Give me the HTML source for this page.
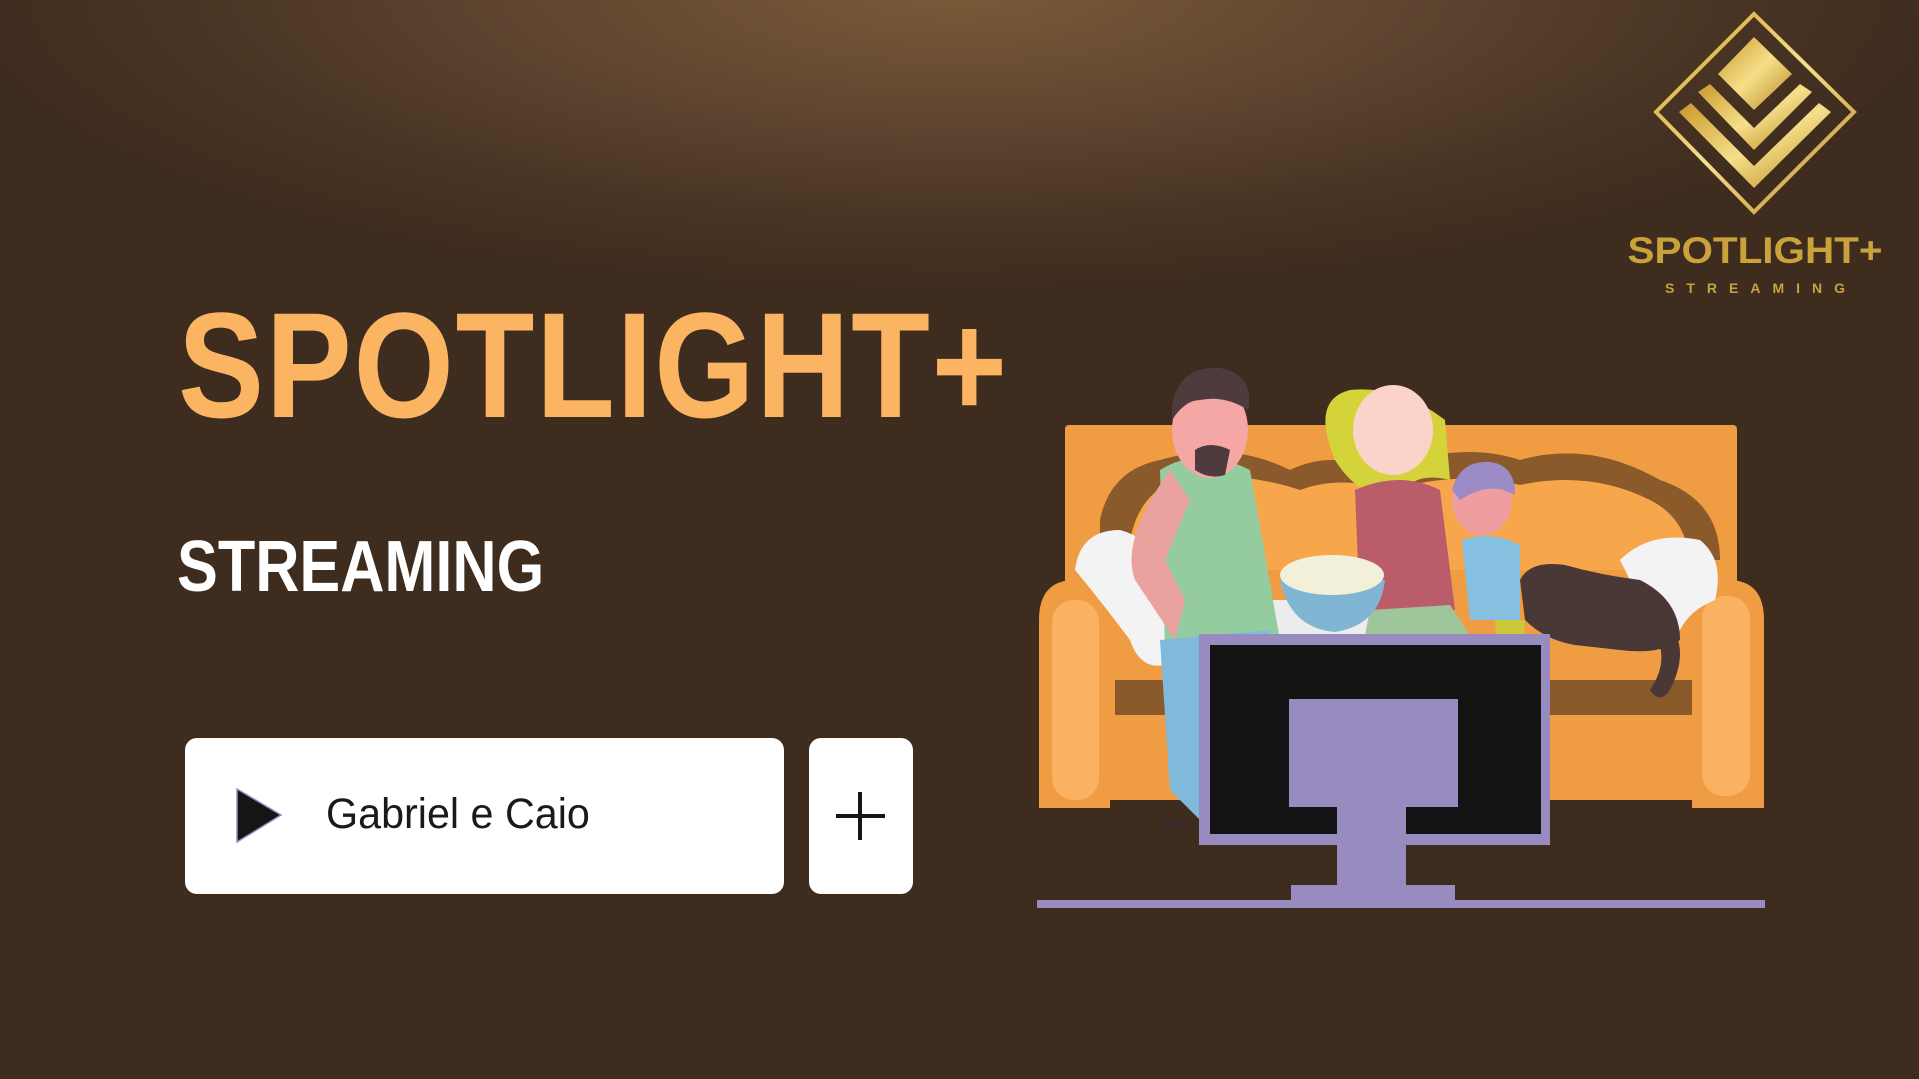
<!DOCTYPE html>
<html><head><meta charset="utf-8"><style>
html,body{margin:0;padding:0}
body{width:1919px;height:1079px;overflow:hidden;position:relative;font-family:"Liberation Sans",sans-serif;
background:radial-gradient(ellipse 1000px 300px at 955px -10px,#7a5a38 0%,#5f4530 45%,#4a3524 75%,#3e2c1f 100%),#3e2c1f;}
.abs{position:absolute}
.title{left:178px;top:279px;font-size:150px;font-weight:bold;color:#fbb461;transform:scaleX(0.86);transform-origin:left top;letter-spacing:2px;white-space:nowrap}
.sub{left:177px;top:526px;font-size:72px;font-weight:bold;color:#fff;transform:scaleX(0.85);transform-origin:left top;white-space:nowrap}
.btn{left:185px;top:738px;width:599px;height:156px;background:#fff;border-radius:12px}
.btn2{left:809px;top:738px;width:104px;height:156px;background:#fff;border-radius:12px}
.txt{left:326px;top:790px;font-size:43px;color:#1a1a1a;transform:scaleX(0.96);transform-origin:left top;white-space:nowrap}
</style></head><body>
<div class="abs title">SPOTLIGHT+</div>
<div class="abs sub">STREAMING</div>
<div class="abs btn"></div>
<div class="abs btn2"></div>
<svg class="abs" style="left:0;top:0" width="1919" height="1079">
<polygon points="237,789 281,815 237,842" fill="#151515" stroke="#9a8cc4" stroke-width="1.5"/>
<rect x="836" y="814" width="49" height="4" fill="#151515"/>
<rect x="858" y="792" width="4" height="48" fill="#151515"/>
</svg>
<div class="abs txt">Gabriel e Caio</div>

<svg class="abs" style="left:1600px;top:0" width="319" height="310">
<defs><linearGradient id="g" x1="0" y1="0" x2="1" y2="1"><stop offset="0" stop-color="#c9982a"/><stop offset=".5" stop-color="#f6df8a"/><stop offset="1" stop-color="#b8861e"/></linearGradient></defs>
<polygon points="154,14 254,112 154,212 56,112" fill="none" stroke="url(#g)" stroke-width="4"/>
<polygon points="154,37 192,74 154,110 118,74" fill="url(#g)"/>
<polygon points="98,92 110,84 154,128 200,84 212,92 154,150" fill="url(#g)"/>
<polygon points="79,112 91,103 154,166 219,103 231,112 154,188" fill="url(#g)"/>
<text x="155" y="263" text-anchor="middle" font-family="Liberation Sans" font-weight="bold" font-size="37" fill="#c9a23c" textLength="255" lengthAdjust="spacingAndGlyphs">SPOTLIGHT+</text>
<text x="155" y="293" text-anchor="middle" font-family="Liberation Sans" font-weight="bold" font-size="14" fill="#c9a23c" textLength="180">STREAMING</text>
</svg>

<svg class="abs" style="left:0;top:0" width="1919" height="1079">
<rect x="1065" y="425" width="672" height="300" fill="#f09c42" rx="4"/>
<path d="M1100 520 Q1110 470 1160 460 Q1230 440 1290 470 Q1330 450 1380 470 Q1460 440 1520 460 Q1590 440 1660 480 Q1720 500 1720 560 L1100 560 Z" fill="#8b5a2b"/>
<path d="M1130 540 Q1140 490 1180 480 Q1240 470 1300 490 Q1340 475 1390 490 Q1460 470 1520 485 Q1590 470 1650 500 Q1690 520 1690 570 L1130 570 Z" fill="#f7a64c"/>
<rect x="1070" y="590" width="680" height="180" fill="#f09c42"/>
<rect x="1115" y="680" width="580" height="35" fill="#8b5a2b"/>
<path d="M1039 808 L1039 620 Q1039 580 1075 580 Q1110 580 1110 620 L1110 808 Z" fill="#f09c42"/>
<rect x="1052" y="600" width="47" height="200" rx="22" fill="#fab262"/>
<path d="M1692 808 L1692 620 Q1692 580 1728 580 Q1764 580 1764 620 L1764 808 Z" fill="#f09c42"/>
<rect x="1702" y="596" width="48" height="200" rx="22" fill="#fab262"/>
<rect x="1110" y="760" width="584" height="40" fill="#f09c42"/>
<path d="M1075 570 Q1080 530 1120 530 Q1160 540 1175 600 L1165 665 Q1140 670 1130 640 Q1100 600 1075 570Z" fill="#f3f3f3"/>
<path d="M1620 560 Q1650 530 1700 540 Q1725 560 1715 600 Q1690 610 1680 630 L1640 600Z" fill="#f3f3f3"/>
<rect x="1230" y="600" width="170" height="40" fill="#ececec"/>
<path d="M1160 470 Q1200 445 1250 470 L1280 640 L1165 650 Z" fill="#94cca0"/>
<path d="M1160 640 L1270 630 L1260 800 L1200 820 L1170 790 Z" fill="#7fb9dc"/>
<ellipse cx="1210" cy="430" rx="38" ry="48" fill="#f4a7a4"/>
<path d="M1172 405 Q1180 365 1220 368 Q1255 375 1248 410 Q1225 395 1200 400 Q1185 400 1172 420Z" fill="#4f3a3e"/>
<path d="M1195 450 Q1210 440 1230 450 L1225 475 Q1210 480 1195 470Z" fill="#4f3a3e"/>
<path d="M1170 470 Q1120 540 1135 580 L1175 640 L1185 600 L1165 560 L1190 500Z" fill="#eaa29e"/>
<path d="M1335 460 Q1310 400 1350 390 Q1400 385 1445 420 L1450 480 Q1410 470 1400 500 Q1360 500 1335 460Z" fill="#d4d43a"/>
<ellipse cx="1393" cy="430" rx="40" ry="45" fill="#fbd3c8"/>
<path d="M1355 490 Q1400 470 1440 490 L1455 610 L1360 615 Z" fill="#bb5c6b"/>
<path d="M1370 610 L1450 605 L1470 635 L1365 635Z" fill="#9fc59b"/>
<ellipse cx="1482" cy="500" rx="30" ry="35" fill="#ee9e9e"/>
<path d="M1452 490 Q1460 460 1490 462 Q1515 465 1515 495 Q1490 480 1460 500Z" fill="#9b8bc6"/>
<path d="M1462 540 Q1490 530 1520 545 L1520 620 L1470 620Z" fill="#86c0e0"/>
<path d="M1495 620 L1525 620 L1520 750 L1505 750Z" fill="#ccc83a"/>
<path d="M1280 580 L1385 580 Q1380 625 1335 632 Q1290 628 1280 580Z" fill="#80b5d4"/>
<ellipse cx="1332" cy="575" rx="52" ry="20" fill="#f2f0d8"/>
<path d="M1520 580 Q1530 560 1565 565 Q1600 575 1640 580 Q1680 600 1680 640 Q1660 655 1620 650 L1575 645 Q1545 640 1525 620Z" fill="#4a3837"/>
<ellipse cx="1560" cy="600" rx="33" ry="30" fill="#4a3837"/>
<path d="M1670 625 Q1690 650 1670 690 Q1660 705 1650 690 Q1670 660 1655 635Z" fill="#4a3837"/>
<rect x="1199" y="634" width="351" height="211" fill="#978bbf"/>
<rect x="1210" y="645" width="331" height="189" fill="#131313"/>
<rect x="1289" y="699" width="169" height="108" fill="#978bbf"/>
<rect x="1337" y="800" width="69" height="90" fill="#978bbf"/>
<rect x="1291" y="885" width="164" height="18" fill="#978bbf"/>
<rect x="1037" y="900" width="728" height="8" fill="#978bbf"/>
<path d="M1165 820 L1185 820 L1185 830 L1163 830Z" fill="#3a2a2a"/>
</svg>
</body></html>
